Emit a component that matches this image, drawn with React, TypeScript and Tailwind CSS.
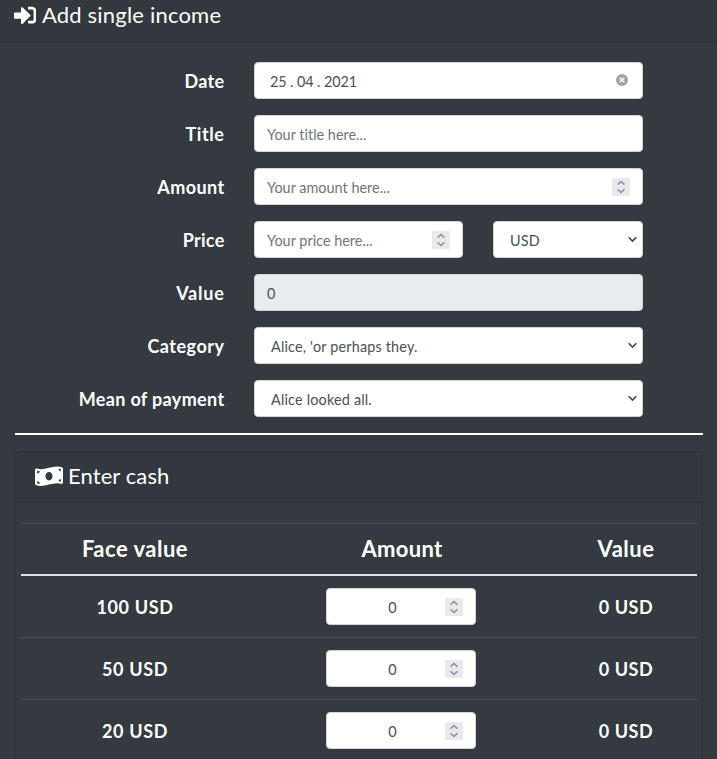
import { FaSignInAlt, FaMoneyBillWave } from "react-icons/fa";
import type { ReactNode } from "react";

const box = "flex h-[37px] items-center rounded-[4px] border border-[#ced4da] text-[14.4px] text-[#495057]";

function Spinner() {
  return (
    <span className="flex h-[18px] w-[18px] shrink-0 items-center justify-center bg-[#e9e9ed]">
      <svg width="18" height="18" viewBox="0 0 18 18" fill="none" stroke="#8f8f9d" strokeWidth="1.5">
        <path d="M5.6 6.6 L9 3.5 L12.4 6.6" />
        <path d="M5.6 11.4 L9 14.5 L12.4 11.4" />
      </svg>
    </span>
  );
}

function Chevron() {
  return (
    <svg className="mr-[5px] shrink-0" width="9" height="7" viewBox="0 0 9 7" fill="none" stroke="#41454c" strokeWidth="1.6">
      <path d="M0.7 1.2 L4.5 5 L8.3 1.2" />
    </svg>
  );
}

function Row({ label, spacing, children }: { label: string; spacing: string; children: ReactNode }) {
  return (
    <div className="flex h-[37px] items-center">
      <div className={`w-[224.5px] pt-[2px] text-right text-[18px] leading-[27px] font-bold text-white ${spacing}`}>{label}</div>
      <div className="ml-[29.5px] flex w-[389px] gap-[30px]">{children}</div>
    </div>
  );
}

function Select({ text, className }: { text: string; className: string }) {
  return (
    <div className={`${box} justify-between bg-white pl-[16px] ${className}`}>
      <span className="pt-[2px] tracking-[0.18px]">{text}</span>
      <Chevron />
    </div>
  );
}

function Placeholder({ text }: { text: string }) {
  return <span className="pt-[2px] tracking-[0.02px] text-[#6c757d]">{text}</span>;
}

export default function App() {
  return (
    <div className="h-[759px] w-[717px] overflow-hidden bg-[#343a40] font-['Lato','Noto_Sans',sans-serif]">
      <header className="flex h-[42px] items-start border-b border-black/15 bg-black/[0.03] pl-[14px] text-white">
        <FaSignInAlt className="mt-[4px] h-[22.4px] w-[22.4px]" />
        <h4 className="ml-[5.5px] text-[22px] leading-[29px] tracking-[0.2px]">Add single income</h4>
      </header>

      <form className="flex flex-col gap-4 pt-5">
        <Row label="Date" spacing="tracking-[0.35px]">
          <div className={`${box} w-full justify-between bg-white pr-[14px] pl-[15px]`}>
            <span className="pt-[2px] tracking-[-0.1px]">25 . 04 . 2021</span>
            <svg className="-mt-[2px]" width="12" height="12" viewBox="0 0 12 12">
              <circle cx="6" cy="6" r="6" fill="#9fa2a7" />
              <path d="M3.7 3.7 L8.3 8.3 M8.3 3.7 L3.7 8.3" stroke="white" strokeWidth="1.5" />
            </svg>
          </div>
        </Row>
        <Row label="Title" spacing="tracking-[0.6px]">
          <div className={`${box} w-full bg-white pl-[12px]`}>
            <Placeholder text="Your title here..." />
          </div>
        </Row>
        <Row label="Amount" spacing="tracking-[0.4px]">
          <div className={`${box} w-full justify-between bg-white px-[12px]`}>
            <Placeholder text="Your amount here..." />
            <Spinner />
          </div>
        </Row>
        <Row label="Price" spacing="tracking-[0.25px]">
          <div className={`${box} w-[209px] justify-between bg-white px-[12px]`}>
            <Placeholder text="Your price here..." />
            <Spinner />
          </div>
          <Select text="USD" className="w-[150px]" />
        </Row>
        <Row label="Value" spacing="tracking-[0.75px]">
          <div className={`${box} w-full bg-[#e9ecef] pl-[12px]`}>
            <span className="pt-[2px]">0</span>
          </div>
        </Row>
        <Row label="Category" spacing="tracking-[0.5px]">
          <Select text="Alice, 'or perhaps they." className="w-full" />
        </Row>
        <Row label="Mean of payment" spacing="tracking-[0.35px]">
          <Select text="Alice looked all." className="w-full" />
        </Row>
      </form>

      <hr className="mt-4 mr-[14px] ml-[15px] border-t-2 border-white" />

      <section className="mt-4 mr-[14px] ml-[15px] h-[330px] rounded-t-[4px] border border-black/15">
        <header className="flex h-[51px] items-center border-b border-black/15 bg-black/[0.03] pb-[2px] pl-[19px] text-white">
          <FaMoneyBillWave className="h-[22.4px] w-[28px]" />
          <h4 className="ml-[5px] pb-px text-[22px] leading-[31px] tracking-[0.1px]">Enter cash</h4>
        </header>
        <div className="mx-[5px] mt-5 text-center font-bold text-white">
          <div className="grid h-[53px] grid-cols-[227px_306px_143px] items-center border-t border-b-2 border-t-[#494f55] border-b-[#dee2e6] pb-[2px] text-[22px] tracking-[0.5px]">
            <div className="pl-px">Face value</div>
            <div className="pl-[2px] tracking-[0.3px]">Amount</div>
            <div className="pl-px">Value</div>
          </div>
          {[100, 50, 20].map((n) => (
            <div key={n} className="grid h-[62px] grid-cols-[227px_306px_143px] items-center border-b border-[#494f55] text-[18px]">
              <div className="pt-[2px] pl-px tracking-[0.65px]">{n} USD</div>
              <div className="flex justify-center">
                <div className={`${box} w-[150px] justify-between bg-white px-[12px] font-normal`}>
                  <span className="flex-1 pt-[2px] pl-px">0</span>
                  <Spinner />
                </div>
              </div>
              <div className="pt-[2px] pl-px tracking-[0.6px]">0 USD</div>
            </div>
          ))}
        </div>
      </section>
    </div>
  );
}
